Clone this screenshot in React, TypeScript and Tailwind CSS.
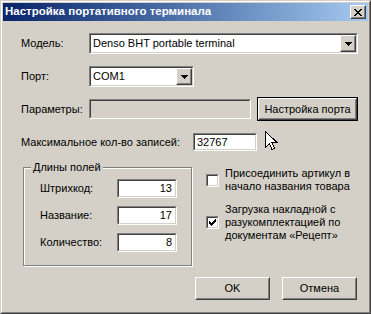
import type { ReactNode } from 'react'

const FONT = "font-['Liberation_Sans',Arial,sans-serif]"

// sunken 3d frame (edit fields, combo boxes, checkboxes)
function Sunken({ className = '', inner = 'bg-white', children }: { className?: string; inner?: string; children?: ReactNode }) {
  return (
    <div className={`border border-t-[#808080] border-l-[#808080] border-r-white border-b-white ${className}`}>
      <div className={`flex h-full items-center border border-t-[#404040] border-l-[#404040] border-r-[#d4d0c8] border-b-[#d4d0c8] ${inner}`}>
        {children}
      </div>
    </div>
  )
}

// raised 3d frame (buttons)
function Raised({ className = '', children }: { className?: string; children?: ReactNode }) {
  return (
    <div className={`border border-t-white border-l-white border-r-[#404040] border-b-[#404040] bg-[#d4d0c8] ${className}`}>
      <div className="flex h-full items-center justify-center border border-t-[#d4d0c8] border-l-[#d4d0c8] border-r-[#808080] border-b-[#808080]">
        {children}
      </div>
    </div>
  )
}

function Combo({ value, width }: { value: string; width: string }) {
  return (
    <Sunken className={`${width} h-[21px]`}>
      <span className="flex-1 pl-[2px] leading-none">{value}</span>
      <Raised className="h-full w-[16px]">
        <svg width="7" height="4" viewBox="0 0 7 4">
          <path d="M0 0h7v1h-1v1h-1v1h-1v1h-1v-1h-1v-1h-1v-1h-1z" fill="#000" />
        </svg>
      </Raised>
    </Sunken>
  )
}

function NumField({ value }: { value: string }) {
  return (
    <Sunken className="h-[19px] w-[60px]" inner="bg-white justify-end pr-[3px]">
      <span className="leading-none">{value}</span>
    </Sunken>
  )
}

function CheckBox({ checked }: { checked?: boolean }) {
  return (
    <Sunken className="h-[13px] w-[13px] shrink-0" inner="bg-white justify-center">
      {checked && (
        <svg width="7" height="7" viewBox="0 0 7 7">
          <path d="M6 0h1v3h-1v1h-1v1h-1v1h-1v1h-1v-1h-1v-1h-1v-3h1v1h1v1h1v-1h1v-1h1v-1h1z" fill="#000" />
        </svg>
      )}
    </Sunken>
  )
}

function Cursor() {
  return (
    <svg className="absolute left-[262px] top-[110px]" width="13" height="21" viewBox="0 0 13 21">
      <path
        d="M0.5 0.5 L0.5 16.5 L4.5 12.5 L7 18.5 L9.5 17.5 L7 11.5 L12 11.5 Z"
        fill="#fff"
        stroke="#000"
        strokeWidth="1"
        shapeRendering="crispEdges"
      />
    </svg>
  )
}

export default function App() {
  return (
    <div className={`h-[314px] w-[371px] border border-t-[#d4d0c8] border-l-[#d4d0c8] border-r-[#404040] border-b-[#404040] text-[11px] text-black ${FONT}`}>
      <div className="flex h-full flex-col border border-t-white border-l-white border-r-[#808080] border-b-[#808080] bg-[#d4d0c8] p-px">
        {/* title bar */}
        <div className="flex h-[18px] items-center bg-linear-to-r from-[#0a246a] to-[#a6caf0] pl-[2px] pr-[2px]">
          <span className="flex-1 text-[11.5px] font-bold text-white">Настройка портативного терминала</span>
          <Raised className="h-[14px] w-[16px]">
            <svg width="8" height="7" viewBox="0 0 8 7">
              <path d="M0 0h2v1h1v1h2v-1h1v-1h2v1h-1v1h-1v1h-1v1h1v1h1v1h1v1h-2v-1h-1v-1h-2v1h-1v1h-2v-1h1v-1h1v-1h1v-1h-1v-1h-1v-1h-1z" fill="#000" />
            </svg>
          </Raised>
        </div>

        {/* client area */}
        <div className="relative flex flex-1 flex-col pl-[18px]">
          <div className="mt-[12px] flex h-[21px] items-center">
            <span className="w-[68px]">Модель:</span>
            <Combo value="Denso BHT portable terminal" width="w-[269px]" />
          </div>

          <div className="mt-[12px] flex h-[21px] items-center">
            <span className="w-[68px]">Порт:</span>
            <Combo value="COM1" width="w-[105px]" />
          </div>

          <div className="mt-[10px] flex h-[24px] items-center">
            <span className="w-[68px]">Параметры:</span>
            <Sunken className="h-[20px] w-[162px]" inner="bg-[#d4d0c8]" />
            <div className="ml-[6px] h-[24px] w-[101px] border border-black">
              <Raised className="h-full w-full">
                <span className="leading-none">Настройка порта</span>
              </Raised>
            </div>
          </div>

          <div className="mt-[12px] flex h-[18px] items-center">
            <span className="w-[172px] whitespace-nowrap">Максимальное кол-во записей:</span>
            <Sunken className="h-[18px] w-[64px]" inner="bg-white pl-[2px]">
              <span className="leading-none">32767</span>
            </Sunken>
          </div>

          <div className="mt-[16px] flex">
            {/* group box */}
            <div className="relative ml-[2px] h-[99px] w-[169px] border border-[#808080] shadow-[inset_1px_1px_0_#fff,1px_1px_0_#fff]">
              <span className="absolute left-[7px] top-[-8px] bg-[#d4d0c8] px-[2px] leading-[14px]">Длины полей</span>
              <div className="mt-[11px] flex flex-col gap-[8px] pl-[16px]">
                <div className="flex h-[19px] items-center">
                  <span className="w-[77px]">Штрихкод:</span>
                  <NumField value="13" />
                </div>
                <div className="flex h-[19px] items-center">
                  <span className="w-[77px]">Название:</span>
                  <NumField value="17" />
                </div>
                <div className="flex h-[19px] items-center">
                  <span className="w-[77px]">Количество:</span>
                  <NumField value="8" />
                </div>
              </div>
            </div>

            {/* options */}
            <div className="ml-[14px] flex flex-col leading-[13px]">
              <div className="flex items-center gap-[6px]">
                <CheckBox />
                <span>
                  Присоединить артикул в
                  <br />
                  начало названия товара
                </span>
              </div>
              <div className="mt-[10px] flex items-center gap-[6px]">
                <CheckBox checked />
                <span>
                  Загрузка накладной с
                  <br />
                  разукомплектацией по
                  <br />
                  документам «Рецепт»
                </span>
              </div>
            </div>
          </div>

          <div className="mt-[11px] flex justify-end gap-[12px] pr-[11px]">
            <Raised className="h-[23px] w-[75px]">
              <span className="leading-none">OK</span>
            </Raised>
            <Raised className="h-[23px] w-[75px]">
              <span className="leading-none">Отмена</span>
            </Raised>
          </div>

          <Cursor />
        </div>
      </div>
    </div>
  )
}
